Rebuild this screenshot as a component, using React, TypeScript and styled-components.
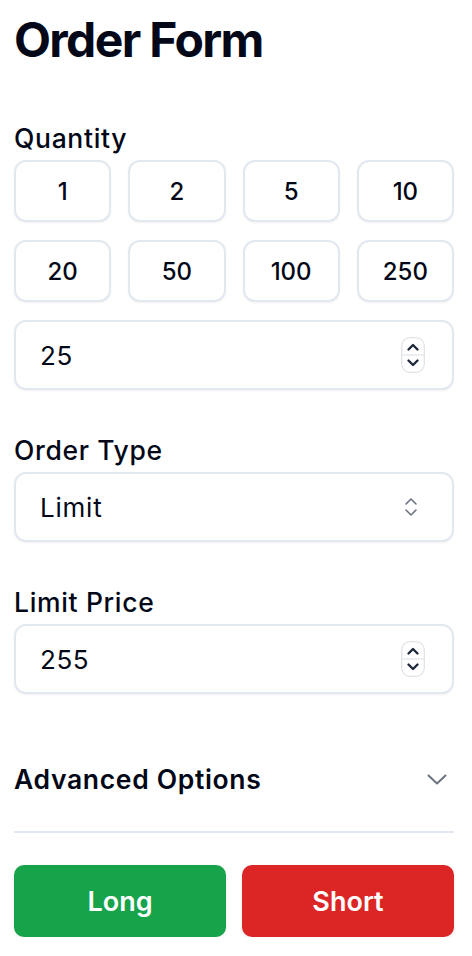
import React from "react";
import styled, { createGlobalStyle } from "styled-components";

const GlobalStyle = createGlobalStyle`
  * { box-sizing: border-box; }
  body {
    margin: 0;
    background: #ffffff;
    font-family: Inter, "Noto Sans", sans-serif;
    color: #020817;
  }
`;

const Page = styled.div`
  width: 440px;
  margin-left: 14px;
  padding-top: 16px;
  display: flex;
  flex-direction: column;
`;

const Title = styled.h1`
  margin: 0 0 58px;
  font-size: 48px;
  line-height: 48px;
  font-weight: 700;
  letter-spacing: -0.034em;
  color: #020817;
`;

const Section = styled.div<{ $gap?: number }>`
  display: flex;
  flex-direction: column;
  gap: 6px;
  margin-bottom: ${(p) => p.$gap ?? 44}px;
`;

const Label = styled.label`
  font-size: 26.5px;
  line-height: 32px;
  font-weight: 500;
  letter-spacing: 0.025em;
  color: #020817;
`;

const QtyGrid = styled.div`
  display: grid;
  grid-template-columns: repeat(4, 1fr);
  gap: 18px 17px;
  margin-bottom: 12px;
`;

const QtyButton = styled.button`
  height: 62px;
  border: 2px solid #e2e8f0;
  border-radius: 12px;
  background: #ffffff;
  box-shadow: 0 1px 2px rgba(15, 23, 42, 0.06);
  font-family: inherit;
  font-size: 24px;
  font-weight: 500;
  color: #020817;
  cursor: pointer;
`;

const Field = styled.div<{ $right?: number }>`
  height: 70px;
  display: flex;
  align-items: center;
  padding: 0 ${(p) => p.$right ?? 27}px 0 24px;
  border: 2px solid #e2e8f0;
  border-radius: 12px;
  background: #ffffff;
  box-shadow: 0 1px 2px rgba(15, 23, 42, 0.06);
`;

const FieldInput = styled.input`
  flex: 1;
  min-width: 0;
  border: none;
  outline: none;
  background: transparent;
  font-family: inherit;
  font-size: 26px;
  letter-spacing: 0.02em;
  color: #020817;
  padding: 0;
`;

const FieldText = styled.span`
  flex: 1;
  font-size: 26px;
  letter-spacing: 0.03em;
  color: #020817;
`;

const Accordion = styled.div`
  display: flex;
  align-items: center;
  justify-content: space-between;
  padding: 25px 7px 36px 0;
  border-bottom: 2px solid #e2e8f0;
  margin-top: 44px;
  margin-bottom: 32px;
`;

const AccordionTitle = styled.span`
  font-size: 26.5px;
  line-height: 32px;
  font-weight: 600;
  letter-spacing: 0.025em;
  color: #020817;
`;

const Actions = styled.div`
  display: grid;
  grid-template-columns: 1fr 1fr;
  gap: 16px;
`;

const ActionButton = styled.button<{ $tone: "long" | "short" }>`
  height: 72px;
  border: none;
  border-radius: 10px;
  background: ${(p) => (p.$tone === "long" ? "#16a34a" : "#dc2626")};
  box-shadow: 0 1px 3px rgba(15, 23, 42, 0.12);
  color: #ffffff;
  font-family: inherit;
  font-size: 27px;
  font-weight: 600;
  cursor: pointer;
`;

const Spinner = () => (
  <svg width="24" height="36" viewBox="0 0 24 36">
    <rect x="0.75" y="0.75" width="22.5" height="34.5" rx="8" fill="#fff" stroke="#d6dae0" strokeWidth="1" />
    <line x1="1" y1="18" x2="23" y2="18" stroke="#d9dde3" strokeWidth="1" />
    <path d="M7.5 12.5 L12 8 L16.5 12.5" fill="none" stroke="#1e293b" strokeWidth="2.4" strokeLinecap="round" strokeLinejoin="round" />
    <path d="M7.5 23.5 L12 28 L16.5 23.5" fill="none" stroke="#1e293b" strokeWidth="2.4" strokeLinecap="round" strokeLinejoin="round" />
  </svg>
);

const UpDown = () => (
  <svg width="14" height="20" viewBox="0 0 14 20">
    <path d="M2 7 L7 2 L12 7" fill="none" stroke="#6b7280" strokeWidth="1.6" strokeLinecap="round" strokeLinejoin="round" />
    <path d="M2 13 L7 18 L12 13" fill="none" stroke="#6b7280" strokeWidth="1.6" strokeLinecap="round" strokeLinejoin="round" />
  </svg>
);

const ChevronDown = () => (
  <svg width="20" height="11" viewBox="0 0 20 11">
    <path d="M1.5 1.5 L10 9.5 L18.5 1.5" fill="none" stroke="#6b7280" strokeWidth="2" strokeLinecap="round" strokeLinejoin="round" />
  </svg>
);

const quantities = [1, 2, 5, 10, 20, 50, 100, 250];

export default function App() {
  return (
    <>
      <GlobalStyle />
      <Page>
        <Title>Order Form</Title>

        <Section>
          <Label>Quantity</Label>
          <QtyGrid>
            {quantities.map((q) => (
              <QtyButton key={q}>{q}</QtyButton>
            ))}
          </QtyGrid>
          <Field>
            <FieldInput type="text" defaultValue="25" />
            <Spinner />
          </Field>
        </Section>

        <Section>
          <Label>Order Type</Label>
          <Field $right={34}>
            <FieldText>Limit</FieldText>
            <UpDown />
          </Field>
        </Section>

        <Section $gap={0}>
          <Label>Limit Price</Label>
          <Field>
            <FieldInput type="text" defaultValue="255" />
            <Spinner />
          </Field>
        </Section>

        <Accordion>
          <AccordionTitle>Advanced Options</AccordionTitle>
          <ChevronDown />
        </Accordion>

        <Actions>
          <ActionButton $tone="long">Long</ActionButton>
          <ActionButton $tone="short">Short</ActionButton>
        </Actions>
      </Page>
    </>
  );
}
